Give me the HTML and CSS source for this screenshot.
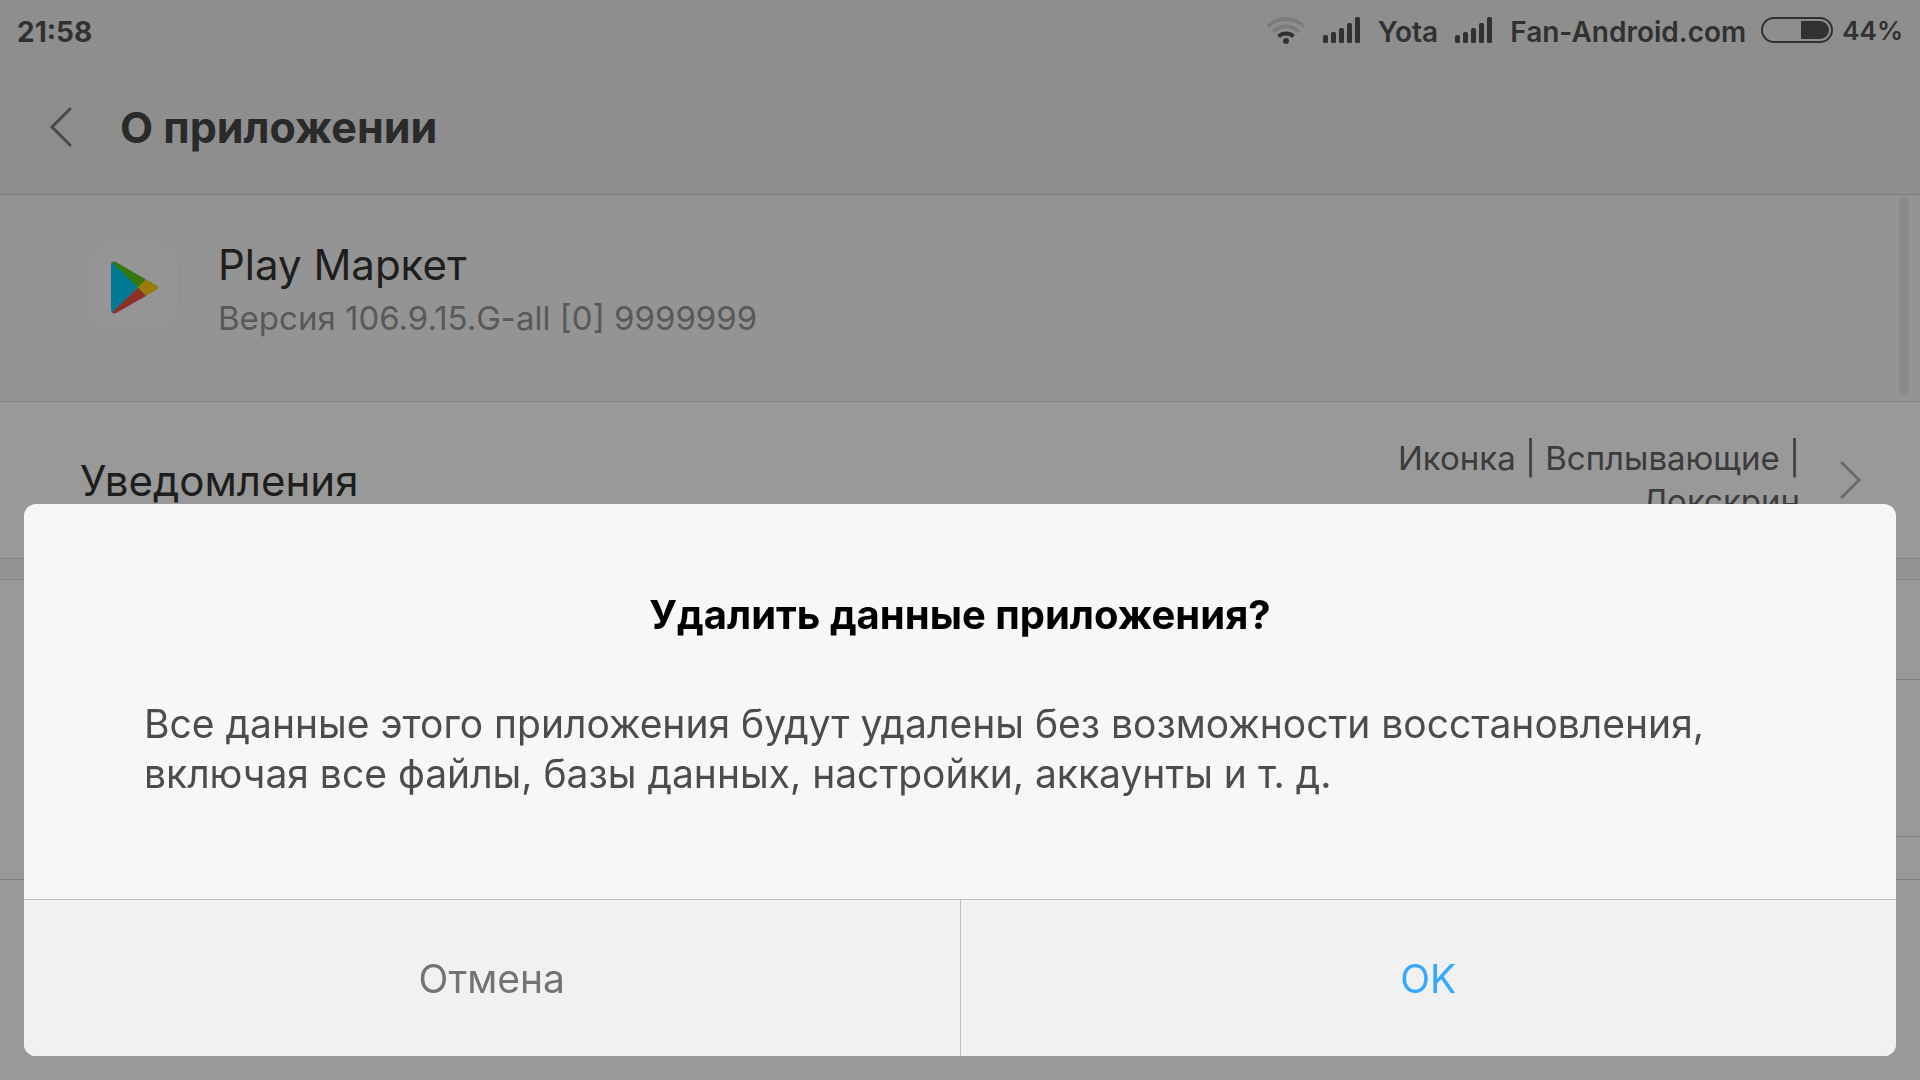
FILE: index.html
```html
<!DOCTYPE html>
<html lang="ru">
<head>
  <meta charset="UTF-8">
  <meta name="viewport" content="width=device-width, initial-scale=1">
  <title>О приложении</title>
  <link rel="stylesheet" href="styles.css">
</head>
<body>
  <div class="screen">
    <header class="header">
      <div class="status">
        <span class="time">21:58</span>
        <div class="status-right">
          <svg class="wifi" width="40" height="28" viewBox="0 0 40 28" fill="none" stroke-width="4">
            <path class="weak" d="M2 10.5a25.5 25.5 0 0 1 36 0"/>
            <path class="weak" d="M7 16a18 18 0 0 1 26 0"/>
            <path class="strong" d="M12.5 20.5a11 11 0 0 1 15 0"/>
            <circle class="dot" cx="20" cy="25" r="3"/>
          </svg>
          <svg class="signal" width="38" height="26" viewBox="0 0 38 26">
            <rect x="0" y="18" width="5" height="8" rx="1.5"/>
            <rect x="8" y="15" width="5" height="11" rx="1.5"/>
            <rect x="16" y="11" width="5" height="15" rx="1.5"/>
            <rect x="24" y="6" width="5" height="20" rx="1.5"/>
            <rect x="32" y="0" width="5" height="26" rx="1.5"/>
          </svg>
          <span class="operator">Yota</span>
          <svg class="signal" width="38" height="26" viewBox="0 0 38 26">
            <rect x="0" y="18" width="5" height="8" rx="1.5"/>
            <rect x="8" y="15" width="5" height="11" rx="1.5"/>
            <rect x="16" y="11" width="5" height="15" rx="1.5"/>
            <rect x="24" y="6" width="5" height="20" rx="1.5"/>
            <rect x="32" y="0" width="5" height="26" rx="1.5"/>
          </svg>
          <span class="operator">Fan-Android.com</span>
          <svg class="battery" width="72" height="26" viewBox="0 0 72 26">
            <rect class="case" x="1" y="1" width="70" height="24" rx="12"/>
            <path class="charge" d="M40 4h19a9 9 0 0 1 0 18H40z"/>
          </svg>
          <span class="percent">44%</span>
        </div>
      </div>
      <div class="title-bar">
        <button class="back" type="button" aria-label="Назад">
          <svg width="24" height="42" viewBox="0 0 24 42">
            <path d="M22 3 4 21l18 18"/>
          </svg>
        </button>
        <h1>О приложении</h1>
      </div>
    </header>

    <main class="content">
      <section class="app">
        <svg class="app-icon" width="94" height="94" viewBox="0 0 94 94">
          <rect class="plate" x="0.5" y="0.5" width="93" height="93" rx="26"/>
          <path fill="#00cbf5" d="M25 24Q25 22 27 22L52 47.500 27 72.500Q25 72 25 70z"/>
          <path fill="#5dc816" d="M26 22Q28 21 30 22L60 39.500 52 47.500z"/>
          <path fill="#ffcd12" d="M60 39.500 71 45.500Q73.500 47.500 71 49.500L60 56 52 47.500z"/>
          <path fill="#eb5241" d="M52 47.500 60 56 30 73Q28 74 26 72.500z"/>
        </svg>
        <div class="app-info">
          <h2>Play Маркет</h2>
          <p>Версия 106.9.15.G-all [0] 9999999</p>
        </div>
        <div class="scrollbar"></div>
      </section>

      <a class="row" href="#">
        <span class="label">Уведомления</span>
        <span class="value">Иконка | Всплывающие | Локскрин</span>
        <svg class="arrow" width="22" height="38" viewBox="0 0 22 38">
          <path d="M2 2 19 19 2 36"/>
        </svg>
      </a>

      <div class="gap"></div>
      <div class="list">
        <div class="item"></div>
        <div class="item tall"></div>
        <div class="item short"></div>
      </div>
    </main>
  </div>

  <div class="backdrop">
    <div class="dialog" role="dialog" aria-modal="true" aria-labelledby="dialog-title">
      <div class="dialog-body">
        <h2 id="dialog-title">Удалить данные приложения?</h2>
        <p>Все данные этого приложения будут удалены без возможности восстановления, включая все файлы, базы данных, настройки, аккаунты и т. д.</p>
      </div>
      <div class="dialog-buttons">
        <button class="cancel" type="button">Отмена</button>
        <button class="ok" type="button">OK</button>
      </div>
    </div>
  </div>
</body>
</html>
```
FILE: styles.css
```css
* {
  box-sizing: border-box;
}

body {
  margin: 0;
  font-family: Inter, Roboto, sans-serif;
  background: #fff;
  color: #323232;
  overflow: hidden;
}

h1, h2, p {
  margin: 0;
}

button {
  font: inherit;
  border: 0;
  background: none;
  padding: 0;
  cursor: pointer;
}

/* Status bar and title */
.header {
  background: #ededed;
  border-bottom: 1px solid #cdcdcd;
}

.status {
  display: flex;
  justify-content: space-between;
  align-items: center;
  height: 64px;
  padding: 0 17px;
  font-size: 28px;
  font-weight: 700;
  color: #535353;
}

.status-right {
  display: flex;
  align-items: center;
}

.status svg,
.percent {
  margin-bottom: 4px;
}

.wifi {
  margin-right: 17px;
}

.wifi .weak {
  stroke: #cfcfcf;
}

.wifi .strong {
  stroke: #535353;
}

.wifi .dot,
.signal {
  fill: #535353;
}

.operator {
  margin: 0 17px;
  font-weight: 600;
}

.percent {
  font-size: 26px;
  font-weight: 600;
}

.operator + .battery {
  margin-left: -2px;
  margin-right: 9px;
}

.battery .case {
  fill: none;
  stroke: #535353;
  stroke-width: 2;
}

.battery .charge {
  fill: #535353;
}

.title-bar {
  display: flex;
  align-items: center;
  height: 130px;
  padding: 0 48px 4px;
  gap: 48px;
}

.back svg {
  display: block;
  fill: none;
  stroke: #7b7b7b;
  stroke-width: 3;
  stroke-linecap: round;
}

h1 {
  font-size: 43px;
  font-weight: 700;
  color: #464646;
}

/* Application card */
.app {
  position: relative;
  display: flex;
  align-items: flex-start;
  gap: 38px;
  height: 207px;
  padding: 45px 86px;
  background: #f7f7f7;
  border-bottom: 1px solid #e1e1e1;
}

.app-icon .plate {
  fill: #f8f8f8;
  stroke: #f1f1f1;
}

.app-info h2 {
  font-size: 42px;
  font-weight: 400;
  line-height: 50px;
}

.app-info p {
  font-size: 33px;
  line-height: 56px;
  color: #949494;
}

.scrollbar {
  position: absolute;
  top: 1px;
  right: 11px;
  width: 10px;
  height: 198px;
  border-radius: 5px;
  background: #e6e6e6;
}

/* Settings rows */
.row {
  display: flex;
  align-items: center;
  height: 157px;
  padding: 0 58px 0 80px;
  border-bottom: 1px solid #e1e1e1;
  color: inherit;
  text-decoration: none;
}

.label {
  flex: 1;
  font-size: 42px;
}

.value {
  width: 440px;
  margin-right: 40px;
  font-size: 33px;
  line-height: 43px;
  text-align: right;
  color: #646464;
}

.arrow {
  fill: none;
  stroke: #b4b4b4;
  stroke-width: 3;
  stroke-linecap: round;
}

.gap {
  height: 21px;
  background: #f7f7f7;
  border-bottom: 1px solid #e1e1e1;
}

.list {
  border-bottom: 1px solid #d7d7d7;
}

.item {
  height: 100px;
  margin-left: 80px;
  border-bottom: 1px solid #d7d7d7;
}

.item.tall {
  height: 157px;
}

.item.short {
  height: 42px;
  border-bottom: 0;
}

/* Dialog */
.backdrop {
  position: fixed;
  inset: 0;
  display: flex;
  align-items: flex-end;
  padding: 24px;
  background: rgba(0, 0, 0, 0.4);
}

.dialog {
  flex: 1;
  border-radius: 12px;
  background: #f7f7f7;
  overflow: hidden;
}

.dialog-body {
  padding: 86px 120px 100px;
}

.dialog-body h2 {
  margin-bottom: 59px;
  font-size: 40px;
  font-weight: 700;
  line-height: 50px;
  text-align: center;
  color: #000;
}

.dialog-body p {
  font-size: 39px;
  line-height: 50px;
  color: #4c4c4c;
}

.dialog-buttons {
  display: flex;
  border-top: 1px solid #bebebe;
  background: #f1f1f1;
}

.dialog-buttons button {
  flex: 1;
  height: 156px;
  font-size: 39px;
}

.dialog-buttons .cancel {
  border-right: 1px solid #bebebe;
  color: #737373;
}

.dialog-buttons .ok {
  color: #35a8ff;
}
```
